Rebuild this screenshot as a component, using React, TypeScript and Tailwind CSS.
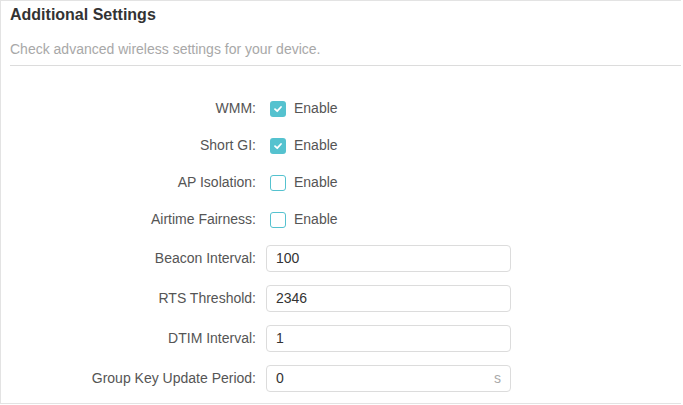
import React from 'react';

type CheckRow = { label: string; checked: boolean };
type InputRow = { label: string; value: string; unit?: string };

const checkRows: CheckRow[] = [
  { label: 'WMM:', checked: true },
  { label: 'Short GI:', checked: true },
  { label: 'AP Isolation:', checked: false },
  { label: 'Airtime Fairness:', checked: false },
];

const inputRows: InputRow[] = [
  { label: 'Beacon Interval:', value: '100' },
  { label: 'RTS Threshold:', value: '2346' },
  { label: 'DTIM Interval:', value: '1' },
  { label: 'Group Key Update Period:', value: '0', unit: 's' },
];

function Checkbox({ checked }: { checked: boolean }) {
  if (checked) {
    return (
      <span className="flex h-[16px] w-[16px] items-center justify-center rounded-[3px] bg-[#55c2cf]">
        <svg width="10" height="10" viewBox="0 0 10 10" fill="none">
          <path d="M2 5.2 L4.2 7.2 L8 3" stroke="white" strokeWidth="1.8" strokeLinecap="round" strokeLinejoin="round" />
        </svg>
      </span>
    );
  }
  return <span className="block h-[16px] w-[16px] rounded-[3px] border border-[#55c2cf] bg-white" />;
}

export default function App() {
  return (
    <div className="h-[405px] w-[683px] bg-white font-['Liberation_Sans',Arial,sans-serif]">
      <div className="h-[404px] w-[681px] border-l border-t border-b border-[#e3e3e3] pl-[9px]">
        <h2 className="pt-[4px] text-[16px] font-bold leading-[20px] text-[#333]">Additional Settings</h2>
        <p className="mt-[14px] text-[14px] leading-[20px] text-[#a8a8a8]">
          Check advanced wireless settings for your device.
        </p>
        <div className="mt-[6px] h-px bg-[#dcdcdc]" />

        <div className="mt-[24px]">
          {checkRows.map(r => (
            <div key={r.label} className="flex h-[37px] items-center">
              <span className="w-[246px] text-right text-[14px] text-[#555]">{r.label}</span>
              <span className="ml-[14px]">
                <Checkbox checked={r.checked} />
              </span>
              <span className="ml-[8px] text-[14px] text-[#555]">Enable</span>
            </div>
          ))}
          {inputRows.map(r => (
            <div key={r.label} className="flex h-[40px] items-center">
              <span className="w-[246px] text-right text-[14px] text-[#555]">{r.label}</span>
              <div className="ml-[10px] flex h-[27px] w-[245px] items-center justify-between rounded-[4px] border border-[#dcdcdc] px-[9px]">
                <span className="text-[14px] text-[#333]">{r.value}</span>
                {r.unit && <span className="text-[14px] text-[#aaa]">{r.unit}</span>}
              </div>
            </div>
          ))}
        </div>
      </div>
    </div>
  );
}
